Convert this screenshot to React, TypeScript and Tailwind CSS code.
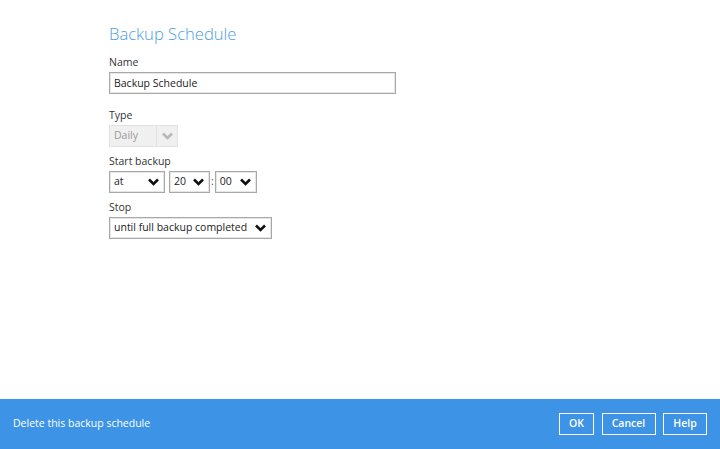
import React, { useState } from "react";

const Chevron = ({ color = "#111" }: { color?: string }) => (
  <svg width="11" height="8" viewBox="0 0 11 8">
    <path d="M1 1.5 L5.5 6 L10 1.5" fill="none" stroke={color} strokeWidth="2.6" />
  </svg>
);

const Select: React.FC<{ value: string; width: string; disabled?: boolean }> = ({ value, width, disabled }) => (
  <div
    className={`${width} h-[22px] flex items-center justify-between border ${
      disabled ? "border-[#e2e2e2] bg-[#f0f0f0] text-[#9a9a9a]" : "border-[#a8a8a8] bg-white text-[#222] shadow-[inset_0_0_0_1px_#e6e6e6]"
    }`}
  >
    <span className="pl-[4px] text-[10.5px] whitespace-nowrap">{value}</span>
    {disabled ? (
      <div className="h-full w-[21px] border-l border-[#e2e2e2] flex items-center justify-center">
        <Chevron color="#b8b8b8" />
      </div>
    ) : (
      <span className="pr-[5px] flex items-center">
        <Chevron />
      </span>
    )}
  </div>
);

const App = () => {
  const [name, setName] = useState("Backup Schedule");

  return (
    <div className="h-[449px] w-[720px] flex flex-col bg-white font-['Open_Sans','Noto_Sans',sans-serif]">
      <div className="flex-1 pl-[109px] pt-[22px]">
        <h1 className="text-[16.6px] leading-[24px] font-light text-[#4b9de3]">Backup Schedule</h1>
        <div className="mt-[9px] text-[10.5px] leading-[14px] text-[#333]">Name</div>
        <input
          className="mt-[3px] w-[287px] h-[22px] border border-[#a8a8a8] shadow-[inset_0_0_0_1px_#e6e6e6] px-[4px] text-[10.5px] text-[#222] outline-none"
          value={name}
          onChange={(e) => setName(e.target.value)}
        />
        <div className="mt-[14px] text-[10.5px] leading-[14px] text-[#333]">Type</div>
        <div className="mt-[3px]">
          <Select value="Daily" width="w-[69px]" disabled />
        </div>
        <div className="mt-[7px] text-[10.5px] leading-[14px] text-[#333]">Start backup</div>
        <div className="mt-[3px] flex items-center">
          <Select value="at" width="w-[56px]" />
          <div className="ml-[4px]">
            <Select value="20" width="w-[41px]" />
          </div>
          <span className="mx-[1px] text-[10.5px] text-[#555]">:</span>
          <Select value="00" width="w-[42px]" />
        </div>
        <div className="mt-[7px] text-[10.5px] leading-[14px] text-[#333]">Stop</div>
        <div className="mt-[3px]">
          <Select value="until full backup completed" width="w-[163px]" />
        </div>
      </div>
      <div className="h-[50px] bg-[#3d94e6] flex items-center justify-between pl-[13px] pr-[13px]">
        <span className="text-[10.5px] text-white">Delete this backup schedule</span>
        <div className="flex gap-[7.5px]">
          {["OK", "Cancel", "Help"].map((b) => (
            <button
              key={b}
              className={`h-[22px] border-[1.5px] border-white text-white text-[10.5px] font-semibold ${
                b === "OK" ? "w-[35px]" : b === "Cancel" ? "w-[54px]" : "w-[44px]"
              }`}
            >
              {b}
            </button>
          ))}
        </div>
      </div>
    </div>
  );
};

export default App;
